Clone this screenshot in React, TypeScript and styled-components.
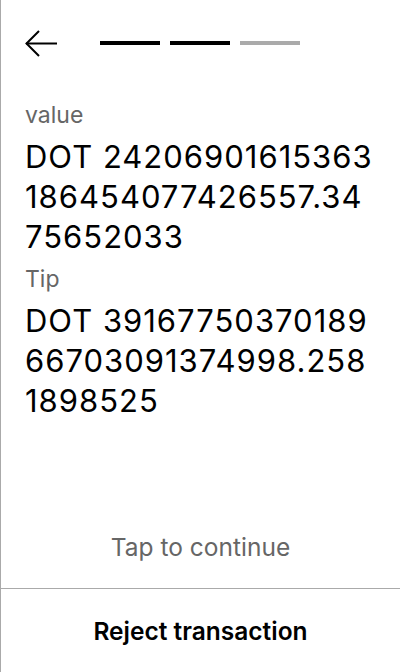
import React from "react";
import styled, { createGlobalStyle } from "styled-components";

const Global = createGlobalStyle`
  html, body { margin: 0; padding: 0; background: #fff; }
  body { font-family: Inter, "Noto Sans", sans-serif; color: #000; }
  #root { height: 672px; }
`;

const Screen = styled.div`
  height: 672px;
  box-sizing: border-box;
  border-left: 1px solid #aaa;
  display: flex;
  flex-direction: column;
`;

const Header = styled.div`
  display: flex;
  align-items: center;
  padding: 30px 0 0 24px;
  height: 26px;
`;

const BackButton = styled.button`
  border: 0;
  background: none;
  padding: 0;
  width: 33px;
  height: 27px;
  display: flex;
  cursor: pointer;
`;

const Progress = styled.div`
  display: flex;
  gap: 10px;
  margin-left: 42px;
`;

const Segment = styled.div<{ $active: boolean }>`
  width: 60px;
  height: 4px;
  background: ${(p) => (p.$active ? "#000" : "#aaa")};
`;

const Content = styled.div`
  flex: 1;
  padding: 37px 24px 0 24px;
  display: flex;
  flex-direction: column;
`;

const Label = styled.div`
  font-size: 23px;
  line-height: 44px;
  color: #666;
`;

const Value = styled.div`
  font-size: 31px;
  line-height: 40px;
  letter-spacing: 1px;
  word-break: break-all;
`;

const TapHint = styled.div`
  margin-top: auto;
  text-align: center;
  font-size: 24.5px;
  color: #666;
  padding-bottom: 26px;
`;

const Footer = styled.button`
  border: 0;
  border-top: 1px solid #aaa;
  background: none;
  height: 84px;
  font-family: Inter, "Noto Sans", sans-serif;
  font-size: 24.5px;
  font-weight: 600;
  color: #000;
  cursor: pointer;
`;

const fields = [
  { label: "value", value: "DOT 24206901615363186454077426557.3475652033" },
  { label: "Tip", value: "DOT 3916775037018966703091374998.2581898525" },
];

export default function App() {
  return (
    <>
      <Global />
      <Screen>
        <Header>
          <BackButton aria-label="Back">
            <svg width="33" height="27" viewBox="0 0 33 27" fill="none">
              <path d="M1 13.5H32" stroke="#000" strokeWidth="2" />
              <path d="M14 1L1.5 13.5L14 26" stroke="#000" strokeWidth="2" />
            </svg>
          </BackButton>
          <Progress>
            <Segment $active />
            <Segment $active />
            <Segment $active={false} />
          </Progress>
        </Header>
        <Content>
          {fields.map((f) => (
            <React.Fragment key={f.label}>
              <Label>{f.label}</Label>
              <Value>{f.value}</Value>
            </React.Fragment>
          ))}
          <TapHint>Tap to continue</TapHint>
        </Content>
        <Footer>Reject transaction</Footer>
      </Screen>
    </>
  );
}
